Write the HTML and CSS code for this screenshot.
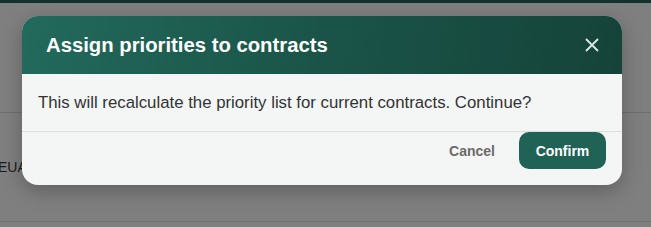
FILE: index.html
```html
<!DOCTYPE html>
<html>
<head>
    <meta charset="UTF-8">
    <title>Assign priorities</title>
    <link rel="stylesheet" href="styles.css">
</head>
<body>
    <div class="topbar"></div>
    <div class="page">
        <div class="row row-first"></div>
        <div class="row row-eua"><span>EUA</span></div>
    </div>

    <div class="overlay">
        <div class="modal">
            <div class="modal-header">
                <h2>Assign priorities to contracts</h2>
                <button class="close-btn" aria-label="Close">
                    <svg width="14" height="14" viewBox="0 0 14 14">
                        <path d="M1 1 L13 13 M13 1 L1 13" stroke="#dfe7e4" stroke-width="1.8" fill="none"/>
                    </svg>
                </button>
            </div>
            <div class="modal-body">
                This will recalculate the priority list for current contracts. Continue?
            </div>
            <div class="modal-footer">
                <button class="cancel-btn">Cancel</button>
                <button class="confirm-btn">Confirm</button>
            </div>
        </div>
    </div>
</body>
</html>
```
FILE: styles.css
```css
body {
    margin: 0;
    padding: 0;
    width: 651px;
    height: 227px;
    overflow: hidden;
    background-color: #7f7f7f;
    font-family: "Liberation Sans", Arial, sans-serif;
}

.topbar {
    height: 3px;
    background-color: #12332d;
}

/* dimmed page behind the dialog */
.page {
    display: flex;
    flex-direction: column;
}

.row {
    border-bottom: 1px solid #6f6f6f;
}

.row-first {
    height: 109px;
}

.row-eua {
    height: 108px;
    display: flex;
    align-items: center;
    font-size: 14px;
    color: #1a1a1a;
}

.row-eua span {
    margin-left: -2px;
}

.overlay {
    position: absolute;
    top: 16px;
    left: 22px;
}

.modal {
    width: 600px;
    background-color: #f4f6f5;
    border-radius: 16px;
    overflow: hidden;
    box-shadow: 0 6px 20px rgba(0, 0, 0, 0.25);
}

.modal-header {
    height: 58px;
    padding: 0 20px 0 24px;
    display: flex;
    justify-content: space-between;
    align-items: center;
    background: linear-gradient(100deg, #226a5c 0%, #1a5448 50%, #15433a 100%);
}

.modal-header h2 {
    margin: 0;
    color: #ffffff;
    font-size: 20.3px;
    font-weight: bold;
}

.close-btn {
    background: none;
    border: none;
    padding: 0;
    width: 20px;
    height: 20px;
    display: flex;
    align-items: center;
    justify-content: center;
    cursor: pointer;
}

.modal-body {
    padding: 18px 16px 18px 16px;
    font-size: 16.8px;
    line-height: 21px;
    color: #333333;
    border-bottom: 1px solid #dcdedd;
}

.modal-footer {
    padding: 0 16px 16px;
    display: flex;
    justify-content: flex-end;
    align-items: center;
    gap: 24px;
}

.cancel-btn {
    background: none;
    border: none;
    font-family: inherit;
    font-size: 14px;
    font-weight: bold;
    color: #6a6a6a;
    padding: 0;
    cursor: pointer;
}

.confirm-btn {
    width: 87px;
    height: 37px;
    background-color: #206356;
    color: #ffffff;
    border: none;
    border-radius: 10px;
    font-family: inherit;
    font-size: 14px;
    font-weight: bold;
    cursor: pointer;
}
```
